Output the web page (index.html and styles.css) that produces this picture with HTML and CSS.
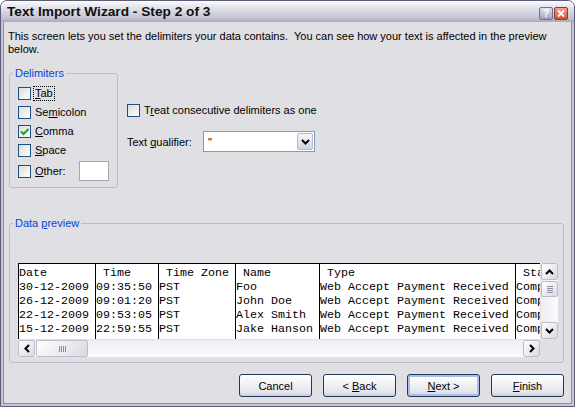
FILE: index.html
```html
<!DOCTYPE html>
<html lang="en">
<head>
  <meta charset="UTF-8">
  <title>Text Import Wizard - Step 2 of 3</title>
  <link rel="stylesheet" href="styles.css">
</head>
<body>
  <div class="window">
    <div class="titlebar">
      <span class="title">Text Import Wizard - Step 2 of 3</span>
      <span class="caption-buttons">
        <span class="cap-btn help">?</span>
        <span class="cap-btn close">
          <svg width="12" height="11" viewBox="0 0 12 11"><path d="M3 2.5l6 6M9 2.5l-6 6" stroke="#fff" stroke-width="1.8"/></svg>
        </span>
      </span>
    </div>

    <div class="client">
      <p class="intro">This screen lets you set the delimiters your data contains.&nbsp; You can see how your text is affected in the preview<br>below.</p>

      <div class="options">
        <fieldset class="group delimiters">
          <legend>Delimiters</legend>
          <div class="check-row first">
            <span class="checkbox"></span>
            <span class="check-label focus"><u>T</u>ab</span>
          </div>
          <div class="check-row">
            <span class="checkbox"></span>
            <span class="check-label">Se<u>m</u>icolon</span>
          </div>
          <div class="check-row">
            <span class="checkbox checked">
              <svg width="11" height="11" viewBox="0 0 11 11"><path d="M2 5.5l2.5 2.5 5-5" fill="none" stroke="#21a121" stroke-width="2"/></svg>
            </span>
            <span class="check-label"><u>C</u>omma</span>
          </div>
          <div class="check-row">
            <span class="checkbox"></span>
            <span class="check-label"><u>S</u>pace</span>
          </div>
          <div class="check-row other">
            <span class="checkbox"></span>
            <span class="check-label"><u>O</u>ther:</span>
            <span class="textbox"></span>
          </div>
        </fieldset>

        <div class="side-options">
          <div class="check-row">
            <span class="checkbox"></span>
            <span class="check-label">T<u>r</u>eat consecutive delimiters as one</span>
          </div>
          <div class="qualifier-row">
            <span class="qualifier-label">Text <u>q</u>ualifier:</span>
            <div class="combo">
              <span class="combo-value">"</span>
              <span class="combo-btn">
                <svg width="9" height="6" viewBox="0 0 9 6"><path d="M1 1l3.5 3.5L8 1" fill="none" stroke="#000" stroke-width="2"/></svg>
              </span>
            </div>
          </div>
        </div>
      </div>

      <fieldset class="group preview-group">
        <legend>Data <u>p</u>review</legend>
        <div class="preview">
          <div class="preview-table">
            <div class="col">Date
30-12-2009
26-12-2009
22-12-2009
15-12-2009</div>
            <div class="col"> Time
09:35:50
09:01:20
09:53:05
22:59:55</div>
            <div class="col"> Time Zone
PST
PST
PST
PST</div>
            <div class="col"> Name
Foo
John Doe
Alex Smith
Jake Hanson</div>
            <div class="col"> Type
Web Accept Payment Received
Web Accept Payment Received
Web Accept Payment Received
Web Accept Payment Received</div>
            <div class="col last"> Status
Completed
Completed
Completed
Completed</div>
          </div>

          <div class="vscroll">
            <span class="sb-btn">
              <svg width="9" height="6" viewBox="0 0 9 6"><path d="M1 5l3.5-3.5L8 5" fill="none" stroke="#000" stroke-width="2"/></svg>
            </span>
            <span class="sb-thumb v-thumb"><span class="grip"></span></span>
            <span class="sb-track"></span>
            <span class="sb-btn">
              <svg width="9" height="6" viewBox="0 0 9 6"><path d="M1 1l3.5 3.5L8 1" fill="none" stroke="#000" stroke-width="2"/></svg>
            </span>
          </div>

          <div class="hscroll">
            <span class="sb-btn">
              <svg width="6" height="9" viewBox="0 0 6 9"><path d="M5 1L1.5 4.5 5 8" fill="none" stroke="#000" stroke-width="2"/></svg>
            </span>
            <span class="sb-thumb h-thumb"><span class="grip"></span></span>
            <span class="sb-track"></span>
            <span class="sb-btn">
              <svg width="6" height="9" viewBox="0 0 6 9"><path d="M1 1l3.5 3.5L1 8" fill="none" stroke="#000" stroke-width="2"/></svg>
            </span>
          </div>
        </div>
      </fieldset>

      <div class="buttons">
        <button class="btn">Cancel</button>
        <button class="btn">&lt; <u>B</u>ack</button>
        <button class="btn default"><u>N</u>ext &gt;</button>
        <button class="btn"><u>F</u>inish</button>
      </div>
    </div>
  </div>
</body>
</html>
```

FILE: styles.css
```css
* {
  box-sizing: border-box;
}
body {
  margin: 0;
  font-family: "Liberation Sans", Arial, sans-serif;
  font-size: 11px;
  color: #000;
  background: #fff;
}
.window {
  width: 575px;
  height: 407px;
  display: flex;
  flex-direction: column;
  border: 1px solid #5d5d78;
  border-radius: 7px 7px 0 0;
  overflow: hidden;
  background: #e0dfe3;
}
.titlebar {
  flex: none;
  height: 21px;
  display: flex;
  justify-content: space-between;
  padding: 0 6px 0 6px;
  background: linear-gradient(#fdfdfe 0%, #ececf2 18%, #d8d8e3 50%, #c4c4d3 80%, #a9a9bd 100%);
}
.title {
  font-size: 13.7px;
  font-weight: bold;
  line-height: 21px;
  color: #111;
}
.caption-buttons {
  display: flex;
  gap: 1px;
  margin-top: 6px;
}
.cap-btn {
  width: 14px;
  height: 13px;
  display: flex;
  align-items: center;
  justify-content: center;
  border-radius: 2px;
}
.cap-btn.help {
  border: 1px solid #6b7094;
  background: linear-gradient(#dfe1ee, #9ea3c2);
  color: #fff;
  font-weight: bold;
  font-size: 10px;
  line-height: 11px;
}
.cap-btn.close {
  border: 1px solid #8e3a2c;
  background: linear-gradient(#f5a08a, #dc4a2e);
}
.client {
  flex: 1;
  padding: 8px 8px 0 6px;
  border: 2px solid #c4c4d4;
  border-top: 0;
  box-shadow: inset 1px 0 #8d8da6, inset -1px -1px #8d8da6;
}
.intro {
  margin: 0 0 0 -1px;
  line-height: 13px;
}
.options {
  display: flex;
  align-items: flex-start;
  margin-top: 11px;
}
.group {
  margin: 0;
  padding: 0 0 5px 0;
  min-width: 0;
  border: 1px solid #bdbdc6;
  border-radius: 3px;
}
.group legend {
  margin-left: 3px;
  padding: 0 2px;
  line-height: 13px;
  color: #0046d5;
}
.delimiters {
  width: 109px;
}
.check-row {
  display: flex;
  align-items: center;
  height: 19px;
}
.delimiters .check-row {
  padding: 0 8px;
}
.delimiters .check-row.first {
  margin-top: 4px;
}
.delimiters .check-row.other {
  height: 22px;
}
.checkbox {
  flex: none;
  width: 13px;
  height: 13px;
  display: flex;
  align-items: center;
  justify-content: center;
  border: 1px solid #1c5180;
  background: linear-gradient(135deg, #dcdcd7, #fff);
}
.check-label {
  margin-left: 4px;
  line-height: 13px;
}
.check-label.focus {
  margin-left: 3px;
  padding: 0 1px;
  outline: 1px dotted #000;
}
.textbox {
  margin-left: auto;
  width: 30px;
  height: 20px;
  border: 1px solid #a7a7b2;
  background: #fff;
}
.side-options {
  margin-left: 9px;
  padding-top: 34px;
}
.qualifier-row {
  display: flex;
  align-items: center;
  margin-top: 11px;
}
.qualifier-label {
  width: 76px;
}
.combo {
  width: 112px;
  height: 21px;
  display: flex;
  align-items: center;
  justify-content: space-between;
  padding: 1px;
  border: 1px solid #7f9db9;
  background: #fff;
}
.combo-value {
  padding-left: 3px;
  color: #000;
}
.combo-btn {
  width: 16px;
  height: 17px;
  display: flex;
  align-items: center;
  justify-content: center;
  border: 1px solid #b9b9cc;
  border-radius: 2px;
  background: linear-gradient(#f7f7fa, #d3d3df);
}
.preview-group {
  margin-top: 29px;
}
.preview {
  display: grid;
  grid-template-columns: 522px 17px;
  grid-template-rows: 76px 17px;
  gap: 1px;
  margin: 33px 0 0 8px;
}
.preview-table {
  display: grid;
  grid-template-columns: 77px 63px 77px 84px 196px 1fr;
  overflow: hidden;
  border-top: 1px solid #000;
  border-left: 1px solid #000;
  background: #fff;
}
.col {
  padding-top: 2px;
  overflow: hidden;
  white-space: pre;
  font-family: "Liberation Mono", "Courier New", monospace;
  font-size: 11.67px;
  line-height: 14px;
  border-right: 1px solid #000;
}
.col.last {
  border-right: 0;
}
.vscroll, .hscroll {
  display: grid;
  background: linear-gradient(90deg, #eeeef3, #fbfbfc);
}
.vscroll {
  grid-template-rows: 17px 16px 1fr 17px;
  row-gap: 1px;
}
.hscroll {
  grid-template-columns: 17px 52px 1fr 17px;
  column-gap: 1px;
  background: linear-gradient(#eeeef3, #fbfbfc);
}
.sb-btn, .sb-thumb {
  display: flex;
  align-items: center;
  justify-content: center;
  border: 1px solid #bcbccf;
  border-radius: 2px;
  background: linear-gradient(135deg, #ffffff, #d9d9e4);
}
.grip {
  width: 6px;
  height: 6px;
}
.v-thumb .grip {
  background: repeating-linear-gradient(#8c8ca3 0 1px, transparent 1px 2px);
  height: 7px;
}
.h-thumb .grip {
  background: repeating-linear-gradient(90deg, #8c8ca3 0 1px, transparent 1px 2px);
  width: 7px;
}
.buttons {
  display: flex;
  justify-content: flex-end;
  gap: 11px;
  margin-top: 11px;
}
.btn {
  width: 73px;
  height: 23px;
  padding: 0;
  font-family: inherit;
  font-size: 11px;
  color: #000;
  border: 1px solid #24385c;
  border-radius: 3px;
  background: linear-gradient(#ffffff, #f3f3f6 40%, #e2e2ea 85%, #cdcdd9);
}
.btn.default {
  box-shadow: inset 0 0 0 2px #a9bfeb;
}
```
